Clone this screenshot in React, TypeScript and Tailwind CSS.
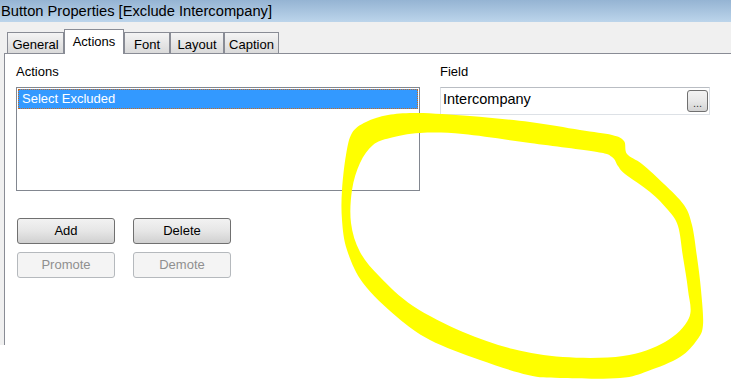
import React from "react";

const font = { fontFamily: '"Liberation Sans", Arial, sans-serif' };

type P = [number, number];

function smoothClosed(pts: P[]): string {
  const n = pts.length;
  let d = `M${pts[0][0]} ${pts[0][1]}`;
  for (let i = 0; i < n; i++) {
    const p0 = pts[(i - 1 + n) % n];
    const p1 = pts[i];
    const p2 = pts[(i + 1) % n];
    const p3 = pts[(i + 2) % n];
    const t = 6;
    const c1x = p1[0] + (p2[0] - p0[0]) / t;
    const c1y = p1[1] + (p2[1] - p0[1]) / t;
    const c2x = p2[0] - (p3[0] - p1[0]) / t;
    const c2y = p2[1] - (p3[1] - p1[1]) / t;
    d += ` C${c1x.toFixed(1)} ${c1y.toFixed(1)} ${c2x.toFixed(1)} ${c2y.toFixed(1)} ${p2[0]} ${p2[1]}`;
  }
  return d + " Z";
}

const outer: P[] = [
  [352, 133], [366, 122], [388, 115], [418, 113], [470, 116], [530, 122], [580, 130],
  [612, 135], [624, 141], [627, 154], [642, 164], [664, 184], [684, 205], [692, 225],
  [697, 257], [701, 290], [703, 325], [697, 340], [680, 357], [648, 371], [620, 378],
  [560, 378], [528, 375], [480, 360], [430, 340], [397, 317], [363, 283], [347, 250],
  [342, 220], [342, 190], [346, 155],
];

const inner: P[] = [
  [373, 145], [390, 138], [420, 133], [463, 134], [530, 143], [597, 152], [612, 157],
  [618, 166], [625, 174], [650, 192], [668, 210], [678, 226], [683, 257], [688, 290],
  [689, 318], [665, 342], [623, 356], [563, 357], [513, 349], [463, 332], [413, 306],
  [380, 277], [360, 252], [351, 223], [352, 190], [360, 163],
];

function Tab({ label, active, w }: { label: string; active?: boolean; w: string }) {
  if (active) {
    return (
      <div
        className={`${w} h-[25px] -mb-px relative z-10 bg-white border border-b-0 border-[#898c95] flex items-start justify-center pt-[4px] text-[13px] leading-[15px] text-black`}
      >
        {label}
      </div>
    );
  }
  return (
    <div
      className={`${w} h-[21px] bg-gradient-to-b from-[#f4f4f4] to-[#dadada] border border-b-0 border-[#898c95] flex items-start justify-center pt-[4px] text-[13px] leading-[15px] text-black`}
    >
      {label}
    </div>
  );
}

function Btn({ label, disabled }: { label: string; disabled?: boolean }) {
  if (disabled) {
    return (
      <div className="w-[98px] h-[26px] rounded-[3px] border border-[#b5b9bd] bg-[#f4f4f4] flex items-center justify-center text-[13px] text-[#8f8f8f]">
        {label}
      </div>
    );
  }
  return (
    <div className="w-[98px] h-[26px] rounded-[3px] border border-[#707070] bg-gradient-to-b from-[#f2f2f2] via-[#e6e6e6] to-[#d0d0d0] flex items-center justify-center text-[13px] text-black">
      {label}
    </div>
  );
}

export default function App() {
  return (
    <div className="relative w-[731px] h-[379px] bg-white overflow-hidden flex flex-col" style={font}>
      {/* Title bar */}
      <div className="h-[22px] bg-gradient-to-b from-[#95b4d3] to-[#bcd5eb] flex items-center pl-[1px] text-[14.7px] leading-[18px] text-black">
        Button Properties [Exclude Intercompany]
      </div>

      {/* Dialog body */}
      <div className="h-[323px] bg-[#f0f0f0] flex flex-col">
        {/* Tab strip */}
        <div className="h-[31px] flex items-end pl-[7px]">
          <Tab label="General" w="w-[57px]" />
          <Tab label="Actions" w="w-[60px]" active />
          <Tab label="Font" w="w-[46px]" />
          <Tab label="Layout" w="w-[54px]" />
          <Tab label="Caption" w="w-[55px]" />
        </div>

        {/* Panel */}
        <div className="flex-1 ml-[4px] bg-white border-l border-t border-[#898c95] pl-[11px] pt-[10px] flex">
          {/* Left column */}
          <div className="w-[404px] flex flex-col">
            <div className="text-[13px] leading-[15px] text-black">Actions</div>
            <div className="mt-[8px] h-[104px] border border-[#828790] bg-white p-px">
              <div className="h-[20px] bg-[#3399ff] border border-dotted border-[#c86b1f] flex items-center pl-[3px] text-[13px] text-white">
                Select Excluded
              </div>
            </div>
            <div className="mt-[27px] ml-px grid grid-cols-[98px_98px] gap-x-[18px] gap-y-[8px] w-max">
              <Btn label="Add" />
              <Btn label="Delete" />
              <Btn label="Promote" disabled />
              <Btn label="Demote" disabled />
            </div>
          </div>

          {/* Right column */}
          <div className="ml-[20px] w-[270px] flex flex-col">
            <div className="text-[13px] leading-[15px] text-black">Field</div>
            <div className="mt-[8px] h-[28px] border border-[#dde1e6] border-t-[#b9bdc3] bg-white flex items-center justify-between pl-[2px] pr-[1px]">
              <span className="text-[14.5px] leading-[17px] text-black -mt-[3px]">Intercompany</span>
              <div className="w-[21px] h-[22px] rounded-[3px] border border-[#707070] bg-gradient-to-b from-[#f3f3f3] via-[#e8e8e8] to-[#d3d3d3] flex items-end justify-center pb-[2px] text-[11px] leading-[11px] text-[#333]">
                ...
              </div>
            </div>
          </div>
        </div>
      </div>

      {/* Yellow freehand annotation */}
      <svg
        className="absolute top-0 left-0 pointer-events-none"
        width="731"
        height="379"
        viewBox="0 0 731 379"
      >
        <path fillRule="evenodd" fill="#ffff00" d={smoothClosed(outer) + " " + smoothClosed(inner)} />
      </svg>
    </div>
  );
}
